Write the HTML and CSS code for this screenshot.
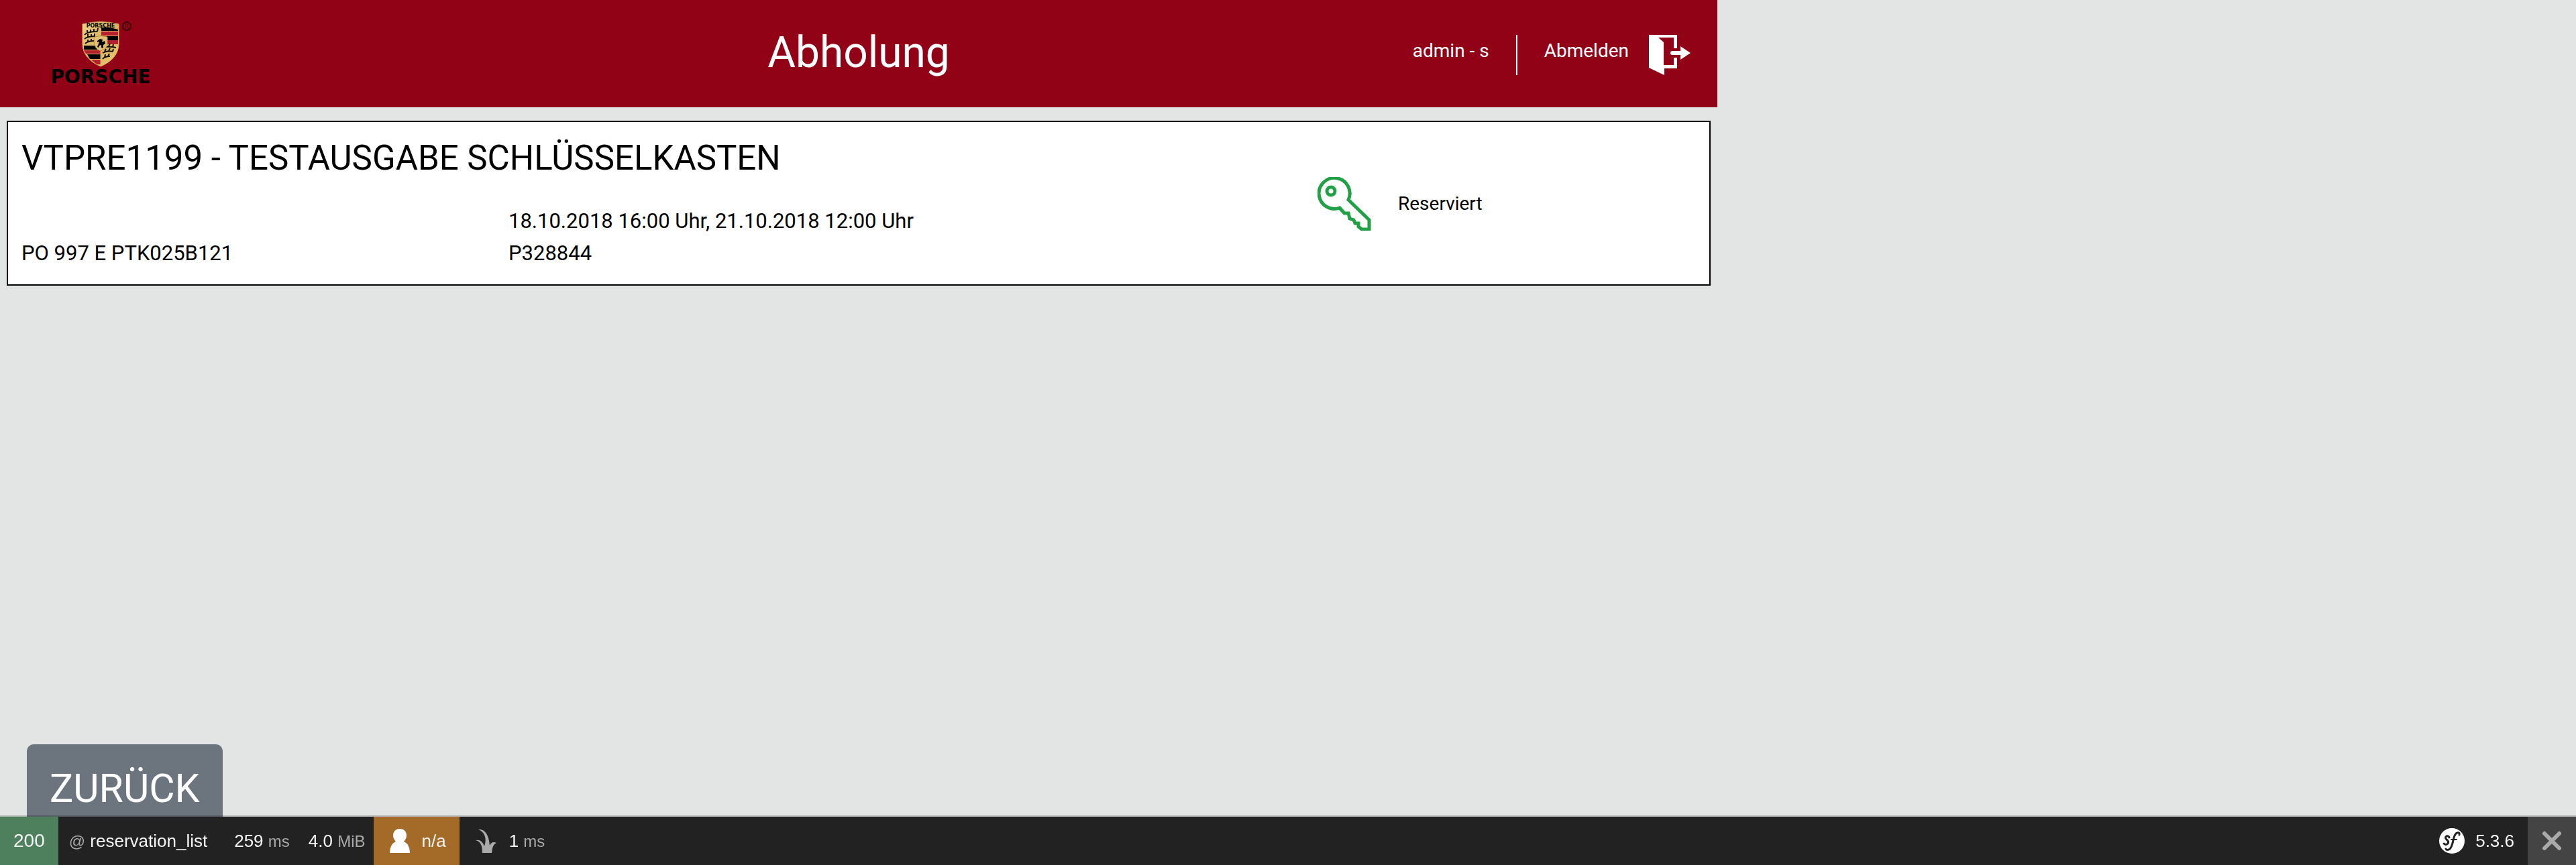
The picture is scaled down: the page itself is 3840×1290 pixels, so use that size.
FILE: index.html
```
<!DOCTYPE html>
<html lang="de">
<head>
<meta charset="utf-8">
<title>Abholung</title>
<link rel="stylesheet" href="styles.css">
</head>
<body>
<div class="page">
  <header class="header">
    <svg class="logo" viewBox="0 0 184 112" role="img" aria-label="Porsche">
      <defs>
        <linearGradient id="gold" x1="0" y1="0" x2="1" y2="1">
          <stop offset="0" stop-color="#f1d58b"/><stop offset=".5" stop-color="#d8b260"/><stop offset="1" stop-color="#f3cf73"/>
        </linearGradient>
        <clipPath id="shield"><path d="M65 8Q92 1 119 8V38Q118 60 92 71Q66 60 65 38Z"/></clipPath>
      </defs>
      <g clip-path="url(#shield)">
        <path fill="url(#gold)" d="M60 0H124V80H60Z"/>
        <path fill="#000" d="M93 13H106L118 16V18H93ZM93 26H118V32H93ZM67 40H92V46H67ZM72 53H92V60H76Z"/>
        <path fill="#b5202c" d="M93 19H118V25H93ZM93 32H118V38H93ZM67 47H92V52H70ZM78 61H92V68H86Z"/>
        <path d="M92 14V70" stroke="#d8b260"/>
        <path fill="none" stroke="#16110a" stroke-width="2" d="M68 24Q72 19 87 19M72 21V17M77 20V16M82 19V15M87 19L88 14M68 30Q73 26 84 26M73 27V23M78 27V23M83 26V22M69 37Q73 33 82 33M73 35V31M78 34V30M115 43Q106 41 98 42M104 41L106 37M110 42L111 38M95 51Q102 47 110 49M98 49L100 45M104 48L106 44M110 49L111 45M95 60Q98 56 106 56M98 58L99 53M103 56L105 52"/>
      </g>
      <path fill="none" stroke="#d8b260" d="M65 8Q92 1 119 8V38Q118 60 92 71Q66 60 65 38Z"/>
      <text class="crest" x="92" y="13" text-anchor="middle">PORSCHE</text>
      <path fill="#e0c074" stroke="#b98f42" d="M83 27Q92 24 102 27V38Q101 45 92 48Q84 45 83 38Z"/>
      <path d="M87 33L91 30L95 31L94 35L98 33L99 37L96 39L96 44L93 43L93 39L90 40L89 43L87 42L89 37L90 34L87 35Z"/>
      <circle cx="131" cy="11" r="6" fill="none" stroke="#3c0008" stroke-width="2"/>
      <path d="M129 14V8H132Q134 10 131 11L134 14" fill="none" stroke="#3c0008"/>
      <text class="wordmark" x="92" y="96" text-anchor="middle">PORSCHE</text>
    </svg>
    <h1 class="title">Abholung</h1>
    <div class="account">
      <span class="user">admin - s</span>
      <a class="logout" href="#logout">Abmelden
        <svg class="exit" viewBox="0 0 62 60" fill="none">
          <path d="M0 0H42V20H37V4H14L22 11V45H37V34H42V50H23V60L0 49Z" fill="#fff"/>
          <path d="M35 27H47" stroke="#fff" stroke-width="6" stroke-linecap="round"/>
          <path d="M47 17L62 27L47 37Z" fill="#fff"/>
        </svg>
      </a>
    </div>
  </header>
  <main class="content">
    <article class="card">
      <h2 class="card-title">VTPRE1199 - TESTAUSGABE SCHLÜSSELKASTEN</h2>
      <p class="plate">PO 997 E PTK025B121</p>
      <p class="period">18.10.2018 16:00 Uhr, 21.10.2018 12:00 Uhr<br>P328844</p>
      <div class="status">
        <svg class="key" viewBox="0 0 80 80" fill="none" stroke="#21a045" stroke-width="5">
          <path d="M46 34A23 23 0 1 0 33 46L40 54H46L48 62L54 64L56 69H61V74L66 78H77V64Z"/>
          <circle cx="20" cy="21" r="6"/>
        </svg>
        <span>Reserviert</span>
      </div>
    </article>
  </main>
  <footer class="actions"><button class="back" type="button">ZURÜCK</button></footer>
</div>
<nav class="toolbar" aria-label="Symfony">
  <a class="code" href="#request">200</a>
  <a class="item route" href="#route"><small>@</small> reservation_list</a>
  <a class="item time" href="#time">259 <small>ms</small></a>
  <a class="item memory" href="#memory">4.0 <small>MiB</small></a>
  <a class="item security" href="#security">
    <svg class="person" viewBox="0 0 30 36" fill="#fff"><path d="M15 0C21 0 25 4 25 10C25 14 23 17 21 19Q30 23 30 36H0Q0 23 9 19C7 17 5 14 5 10C5 4 9 0 15 0Z"/></svg>
    n/a</a>
  <a class="item twig" href="#twig">
    <svg class="grass" viewBox="0 0 32 36" fill="#aaa"><path d="M10 36C10 26 8 19 0 17Q9 15 13 26C17 15 14 5 4 1C15 0 20 11 21 25Q24 18 31 21Q25 23 24 36Z"/></svg>
    <span>1 <small>ms</small></span></a>
  <a class="item version" href="#config">
    <svg class="symfony" viewBox="0 0 38 38" fill="none"><circle cx="19" cy="19" r="19" fill="#fff"/>
      <g stroke="#222" stroke-linecap="round" stroke-linejoin="round">
        <path stroke-width="3" d="M15 14Q14 11 11 12Q8 14 11 17Q15 20 13 23Q10 26 7 23"/>
        <path stroke-width="3" d="M30 10Q31 6 27 7C23 8 22 14 21 18C20 23 19 28 16 31Q12 34 10 31"/>
        <path stroke-width="2" d="M18 17H26"/>
      </g></svg>
    5.3.6</a>
  <button class="close" type="button" aria-label="Close">
    <svg class="cross" viewBox="0 0 30 30"><path d="M4 4L26 26M26 4L4 26" stroke="#aaa" stroke-width="6" stroke-linecap="round"/></svg>
  </button>
</nav>
</body>
</html>
```
FILE: styles.css
```
* { box-sizing: border-box; }
body {
  margin: 0;
  background: #e2e5e4;
  color: #000;
  font-family: Roboto, sans-serif;
  font-size: 31px;
  line-height: 48px;
}
h1, h2, p { margin: 0; font-weight: 400; }
a { color: inherit; text-decoration: none; }
svg { display: block; flex: none; }
button { border: 0; font: inherit; }

.page {
  display: flex;
  flex-direction: column;
  width: 66.6667%;
  height: 100vh;
  overflow: hidden;
}
.header {
  display: grid;
  grid-template-columns: 1fr auto 1fr;
  align-items: start;
  height: 160px;
  padding: 28px 40px 0 58px;
  background: #910217;
  color: #fff;
}
.logo { width: 184px; height: 112px; }
.wordmark { font: 700 28px "DejaVu Sans", sans-serif; }
.crest { font: 700 8px "DejaVu Sans", sans-serif; }
.title { margin-right: 18px; font-size: 64px; line-height: 102px; }
.account {
  display: flex;
  justify-content: flex-end;
  padding-top: 24px;
  font-size: 28px;
}
.user { padding-right: 40px; border-right: 2px solid #fff; }
.logout { display: flex; gap: 30px; padding-left: 40px; }
.exit { width: 62px; height: 60px; }

.content { padding: 20px 10px; }
.card {
  display: grid;
  grid-template-columns: 726fr 1206fr 564fr;
  grid-template-rows: 108px auto;
  padding: 16px 20px 22px;
  border: 2px solid #000;
  background: #fff;
}
.card-title { grid-column: 1 / 3; font-size: 51px; line-height: 76px; }
.plate { grid-column: 1; align-self: end; }
.period { grid-column: 2; }
.status {
  grid-area: 1 / 3 / 3 / 4;
  display: flex;
  align-items: center;
  gap: 40px;
  height: 80px;
  margin-top: 66px;
  font-size: 28px;
}
.key { width: 80px; height: 80px; }

.actions { height: 180px; margin-top: auto; padding-left: 40px; }
.back {
  padding: 18px 34px;
  border-radius: 10px;
  background: #6c757d;
  color: #fff;
  font-size: 59px;
  line-height: 96px;
}

.toolbar {
  position: fixed;
  right: 0;
  bottom: 0;
  left: 0;
  display: flex;
  height: 72px;
  background: #222;
  box-shadow: 0 -2px 0 rgba(0, 0, 0, .2);
  color: #f5f5f5;
  font: 26px/72px "Liberation Sans", sans-serif;
}
.toolbar small { color: #aaa; font-size: 24px; }
.code { padding: 0 20px; background: #4f805d; font-size: 28px; }
.item { padding: 0 16px; white-space: nowrap; }
.time { padding-left: 24px; }
.memory { padding: 0 12px; }
.security, .twig, .version { display: flex; align-items: center; }
.security { gap: 18px; padding: 0 20px 0 24px; background: #a46a27; }
.person { width: 30px; height: 36px; }
.twig { gap: 18px; padding-left: 24px; }
.grass { width: 32px; height: 36px; }
.version { gap: 16px; margin-left: auto; padding-right: 20px; }
.symfony { width: 38px; height: 38px; }
.close {
  display: grid;
  place-items: center;
  width: 72px;
  padding: 0;
  background: #444;
}
.cross { width: 30px; height: 30px; }
```
